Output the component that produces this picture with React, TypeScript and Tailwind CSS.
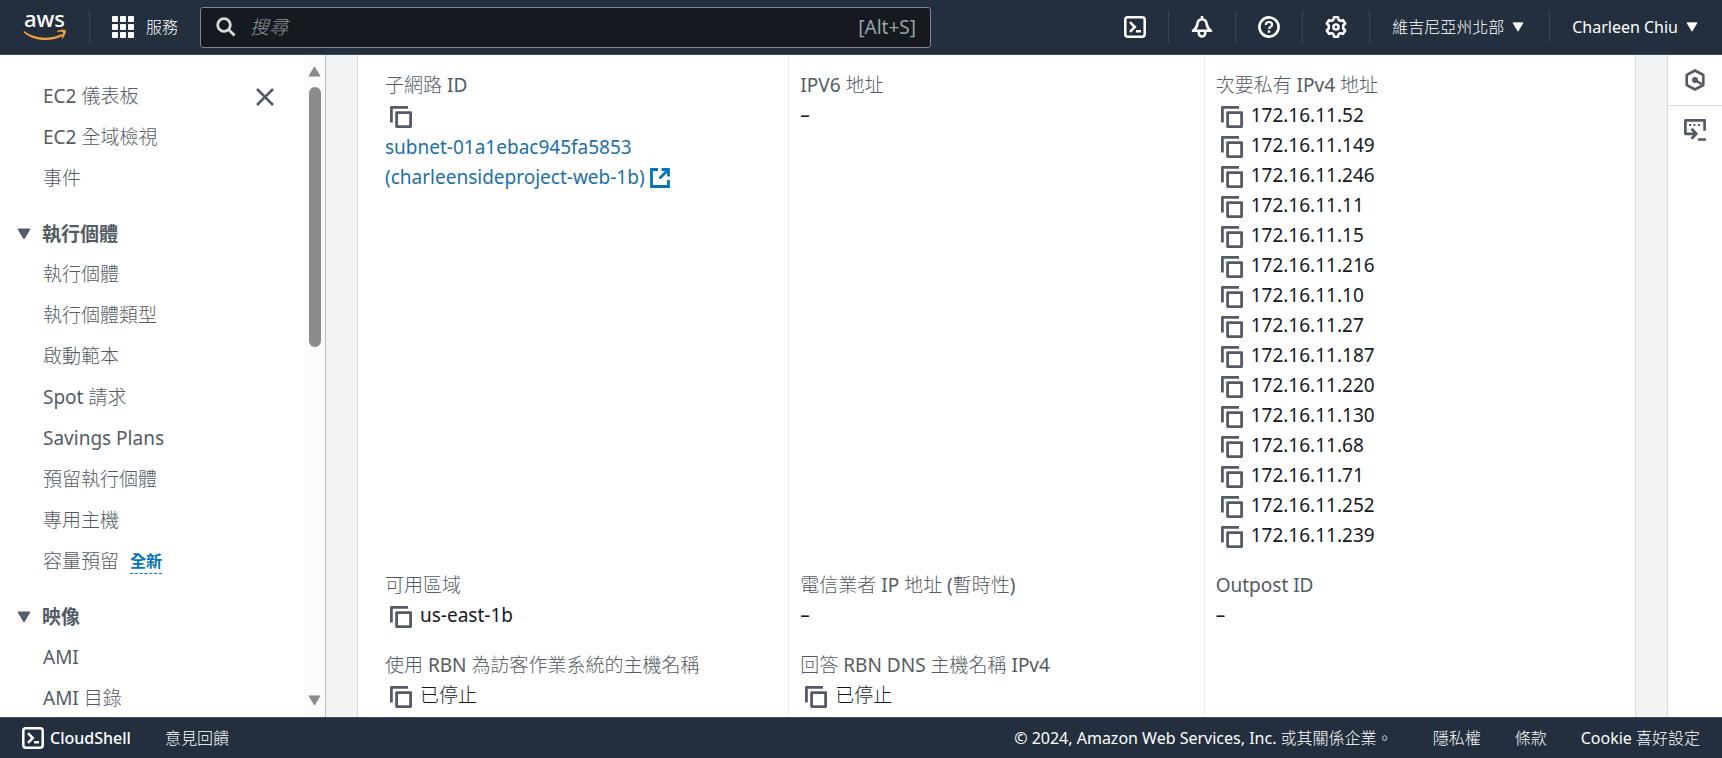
import React from "react";

type IconProps = { className?: string };

const Copy = () => (
  <svg viewBox="0 0 22 22" className="h-[22px] w-[22px] shrink-0" fill="none" stroke="#545b64" strokeWidth="2.8" strokeLinejoin="round">
    <path d="M1.400 16.500V1.400H18" />
    <rect x="6.600" y="6.600" width="14" height="14" />
  </svg>
);

const Shell = ({ className }: IconProps) => (
  <svg viewBox="0 0 22 22" className={className} fill="none" stroke="currentColor" strokeWidth="2.500">
    <rect x="1.300" y="1.300" width="19.400" height="19.400" rx="2.400" />
    <path d="M6 6.200 10.800 11 6 15.800M12 15.300h5" />
  </svg>
);

const Bell = () => (
  <svg viewBox="0 0 22 22" className="h-[22px] w-[22px]" fill="none" stroke="currentColor" strokeWidth="2.600" strokeLinejoin="round">
    <path d="M11 0v3M2 14.800h18c-2.800-1.700-4-3.800-4.300-6.600C15.300 4.800 13.800 3.200 11 3.200S6.700 4.800 6.300 8.200C6 11 4.800 13.100 2 14.800Z" />
    <path d="M7.800 15.500v1.800a3.200 3.200 0 0 0 6.400 0v-1.800" />
  </svg>
);

const Help = () => (
  <svg viewBox="0 0 22 22" className="h-[22px] w-[22px]" fill="none" stroke="currentColor" strokeWidth="2.600">
    <circle cx="11" cy="11" r="9.600" />
    <path d="M7.800 9c0-1.900 1.300-3 3.200-3s3.200 1.100 3.200 2.700c0 2-3.200 2.200-3.200 4.300" strokeWidth="2.200" />
    <path d="M11 14.400v2.400" strokeWidth="2.400" />
  </svg>
);

const Gear = () => (
  <svg viewBox="0 0 22 22" className="h-[22px] w-[22px]" fill="none" stroke="currentColor" strokeWidth="2.500" strokeLinejoin="round">
    <path d="M9 1.300h4l.7 2.700 1.600.9 2.700-.8 2.200 3.400-2 2v3l2 2-2.200 3.400-2.700-.8-1.600.9-.7 2.700H9L8.300 18l-1.600-.9-2.700.8-2.200-3.400 2-2v-3l-2-2L4 4.100l2.700.8L8.300 4Z" />
    <circle cx="11" cy="11" r="2.600" />
  </svg>
);

const Hexagon = () => (
  <svg viewBox="0 0 22 22" className="h-[22px] w-[22px]" fill="none" stroke="currentColor" strokeWidth="2.600">
    <path d="M11 1.500 19.300 6v10L11 20.500 2.700 16V6Z" strokeLinejoin="round" />
    <circle cx="11" cy="11" r="3" fill="currentColor" stroke="none" />
    <path d="m11 11 6.500 4" />
  </svg>
);

const Terminal = () => (
  <svg viewBox="0 0 22 22" className="h-[22px] w-[22px]" fill="none" stroke="currentColor" strokeWidth="2.700">
    <path d="M5 14.800H1.400V1.400h19.200v10.400" strokeLinejoin="round" />
    <path d="M5 6h2M9.500 6h2M14 6h2" strokeWidth="2" />
    <path d="M4.500 14.800h7M7.500 9.800l4.800 5-4.800 5M14 20.500h8" />
  </svg>
);

const External = () => (
  <svg viewBox="0 0 20 20" className="inline h-5 w-5 align-[-4px]" fill="none" stroke="#0073bb" strokeWidth="2.800">
    <path d="M8 1.500H1.500v17h17V12M11.500 1.500h7v7M18 2l-8.500 8.500" />
  </svg>
);

const Caret = ({ className }: IconProps) => (
  <svg viewBox="0 0 14 12" className={className} fill="currentColor" stroke="currentColor" strokeLinejoin="round">
    <path d="M1 1h12L7 11Z" />
  </svg>
);

const AwsLogo = () => (
  <svg viewBox="0 -11 44 54" className="h-[54px] w-11" role="img" aria-label="aws">
    <text x="21.500" y="16" textAnchor="middle" fontSize="22" fontWeight="500" fill="#fff" fontFamily="Noto Sans, sans-serif">aws</text>
    <path d="M1 20c11 8 26 8.500 38 3l1.200 1.400C28 31.500 10 30.500.3 21Z" fill="#f0a040" />
    <path d="M34 20.200c3-1.900 8-1.900 8.700-.9s-.5 5.700-3.300 8.300l-.9-.4c1-2.300 1.800-5 1.300-5.900s-3.500-.7-5.600-.4Z" fill="#f0a040" />
  </svg>
);

const Apps = () => (
  <svg viewBox="0 0 22 22" className="h-[22px] w-[22px]" fill="currentColor">
    {[0, 8, 16].map((y) => [0, 8, 16].map((x) => <rect key={`${x}-${y}`} x={x} y={y} width="6" height="6" rx="1" />))}
  </svg>
);

const Divider = () => <span className="h-8 w-px bg-[#3a4552]" />;

function Header() {
  return (
    <header className="flex h-[55px] shrink-0 items-center border-b border-[#414d5c] bg-[#232f3e] text-white">
      <a href="#home" className="ml-[23px] mr-[22px]"><AwsLogo /></a>
      <Divider />
      <button className="ml-[22px] flex items-center gap-3 text-base">
        <Apps />服務
      </button>
      <label className="ml-[22px] flex h-[41px] w-[731px] shrink items-center rounded-[3px] border border-[#7f8690] bg-[#16191f] pl-[15px] pr-3.5">
        <svg viewBox="0 0 20 20" className="h-5 w-5 shrink-0" fill="none" stroke="#d5dbdb" strokeWidth="2.800">
          <circle cx="8" cy="8" r="6.300" /><path d="m12.500 12.500 6 6" />
        </svg>
        <input type="search" aria-label="搜尋" placeholder="搜尋" className="ml-3.5 min-w-0 flex-1 bg-transparent text-[19px] outline-none placeholder:italic placeholder:text-[#879596]" />
        <span className="text-[19px] text-[#95a5a6]">[Alt+S]</span>
      </label>
      <div className="ml-auto flex items-center">
        <button aria-label="CloudShell" className="px-[22px]"><Shell className="h-[22px] w-[22px]" /></button>
        <Divider />
        <button aria-label="通知" className="px-[22px]"><Bell /></button>
        <Divider />
        <button aria-label="說明" className="px-[22px]"><Help /></button>
        <Divider />
        <button aria-label="設定" className="px-[22px]"><Gear /></button>
        <Divider />
        <button className="flex items-center gap-2 pl-[22px] pr-[25px] text-base">維吉尼亞州北部<Caret className="h-2.5 w-3" /></button>
        <Divider />
        <button className="flex items-center gap-2 pl-[22px] pr-6 text-base">Charleen Chiu<Caret className="h-2.5 w-3" /></button>
      </div>
    </header>
  );
}

const topLinks = ["EC2 全域檢視", "事件"];
const groups = [
  { title: "執行個體", items: ["執行個體", "執行個體類型", "啟動範本", "Spot 請求", "Savings Plans", "預留執行個體", "專用主機", "容量預留"] },
  { title: "映像", items: ["AMI", "AMI 目錄"] },
];

function Sidebar() {
  return (
    <aside className="flex w-[326px] shrink-0 overflow-hidden border-r border-[#b8bcbf] bg-white text-[#545b64]">
      <nav className="min-w-0 flex-1 pt-[21px]">
        <div className="flex h-[41px] items-center justify-between pl-[43px] pr-[29px]">
          <a href="#dashboard">EC2 儀表板</a>
          <button aria-label="關閉" className="text-[#545b64]">
            <svg viewBox="0 0 20 20" className="h-5 w-5" fill="none" stroke="currentColor" strokeWidth="2.500"><path d="m2 2 16 16M18 2 2 18" /></svg>
          </button>
        </div>
        {topLinks.map((t) => (
          <a key={t} href="#nav" className="flex h-[41px] items-center pl-[43px]">{t}</a>
        ))}
        {groups.map((g) => (
          <section key={g.title} className="pt-[15px]">
            <button className="flex h-10 items-center gap-[11px] pl-[17px] font-['Noto_Sans','Noto_Sans_CJK_TC',sans-serif] font-bold">
              <Caret className="h-3 w-3.5" />{g.title}
            </button>
            {g.items.map((t) => (
              <div key={t} className="flex h-[41px] items-center gap-[11px] pl-[43px]">
                <a href="#nav">{t}</a>
                {t === "容量預留" && <button className="border-b border-dashed border-[#0073bb] font-['Noto_Sans','Noto_Sans_CJK_TC',sans-serif] text-base font-bold leading-[23px] text-[#0073bb]">全新</button>}
              </div>
            ))}
          </section>
        ))}
      </nav>
      <div className="flex w-[21px] flex-col items-center bg-[#fbfbfb] pb-[11px] pt-[11px] text-[#8b8b8b]">
        <Caret className="h-[11px] w-[13px] rotate-180" />
        <div className="mt-2.5 h-[260px] w-3 rounded-full bg-[#8b8b8b]" />
        <Caret className="mt-auto h-[11px] w-[13px]" />
      </div>
    </aside>
  );
}

const addresses = ["52", "149", "246", "11", "15", "216", "10", "27", "187", "220", "130", "68", "71", "252", "239"];

const Copied = ({ children }: { children?: React.ReactNode }) => (
  <div className="flex min-h-[30px] items-center gap-2">
    <button aria-label="複製" className="pl-[5px] pt-1"><Copy /></button>
    {children}
  </div>
);

const Field = ({ label, children }: { label?: string; children?: React.ReactNode }) => (
  <div className="border-l border-[#eaeded] pb-5 pl-[11px] nth-[3n+2]:border-transparent">
    {label && <dt className="text-[#545b64]">{label}</dt>}
    <dd>{children}</dd>
  </div>
);

function Details() {
  return (
    <main className="min-w-0 flex-1 overflow-hidden bg-[#f2f3f3] px-[31px]">
      <section className="h-full border-x border-[#d5dbdb] bg-white pl-[15px] pr-4 leading-[30px]">
        <dl className="grid grid-cols-3 text-[#16191f]">
          <div className="col-span-3 grid h-[15px] grid-cols-3">
            <span /><span className="border-l border-[#eaeded]" /><span className="border-l border-[#eaeded]" />
          </div>
          <Field label="子網路 ID">
            <Copied />
            <a href="#subnet" className="block pt-0.5 text-[#1b6fac]">
              subnet-01a1ebac945fa5853<br />(charleensideproject-web-1b) <External />
            </a>
          </Field>
          <Field label="IPV6 地址">–</Field>
          <Field label="次要私有 IPv4 地址">
            {addresses.map((a) => <Copied key={a}>172.16.11.{a}</Copied>)}
          </Field>
          <Field label="可用區域"><Copied>us-east-1b</Copied></Field>
          <Field label="電信業者 IP 地址 (暫時性)">–</Field>
          <Field label="Outpost ID">–</Field>
          <Field label="使用 RBN 為訪客作業系統的主機名稱"><Copied>已停止</Copied></Field>
          <Field label="回答 RBN DNS 主機名稱 IPv4"><Copied>已停止</Copied></Field>
          <Field />
        </dl>
      </section>
    </main>
  );
}

export default function App() {
  return (
    <div className="flex h-screen flex-col overflow-hidden bg-white font-['Noto_Sans','Noto_Sans_CJK_TC_Light','Noto_Sans_CJK_TC',sans-serif] text-[19px]">
      <Header />
      <div className="flex min-h-0 flex-1">
        <Sidebar />
        <Details />
        <aside className="w-[55px] shrink-0 border-l border-[#d5dbdb] text-[#545b64]">
          <button aria-label="說明面板" className="flex h-[51px] w-full items-center justify-center border-b border-[#d5dbdb]"><Hexagon /></button>
          <button aria-label="終端機" className="flex h-12 w-full items-center justify-center"><Terminal /></button>
        </aside>
      </div>
      <footer className="flex h-[41px] shrink-0 items-center border-t border-[#414d5c] bg-[#232f3e] px-[22px] text-base text-white">
        <button className="flex items-center gap-1.5 font-medium"><Shell className="h-[22px] w-[22px]" />CloudShell</button>
        <a href="#feedback" className="ml-[34px]">意見回饋</a>
        <span className="ml-auto">© 2024, Amazon Web Services, Inc. 或其關係企業。</span>
        <a href="#privacy" className="ml-10">隱私權</a>
        <a href="#terms" className="ml-[34px]">條款</a>
        <button className="ml-[34px]">Cookie 喜好設定</button>
      </footer>
    </div>
  );
}
